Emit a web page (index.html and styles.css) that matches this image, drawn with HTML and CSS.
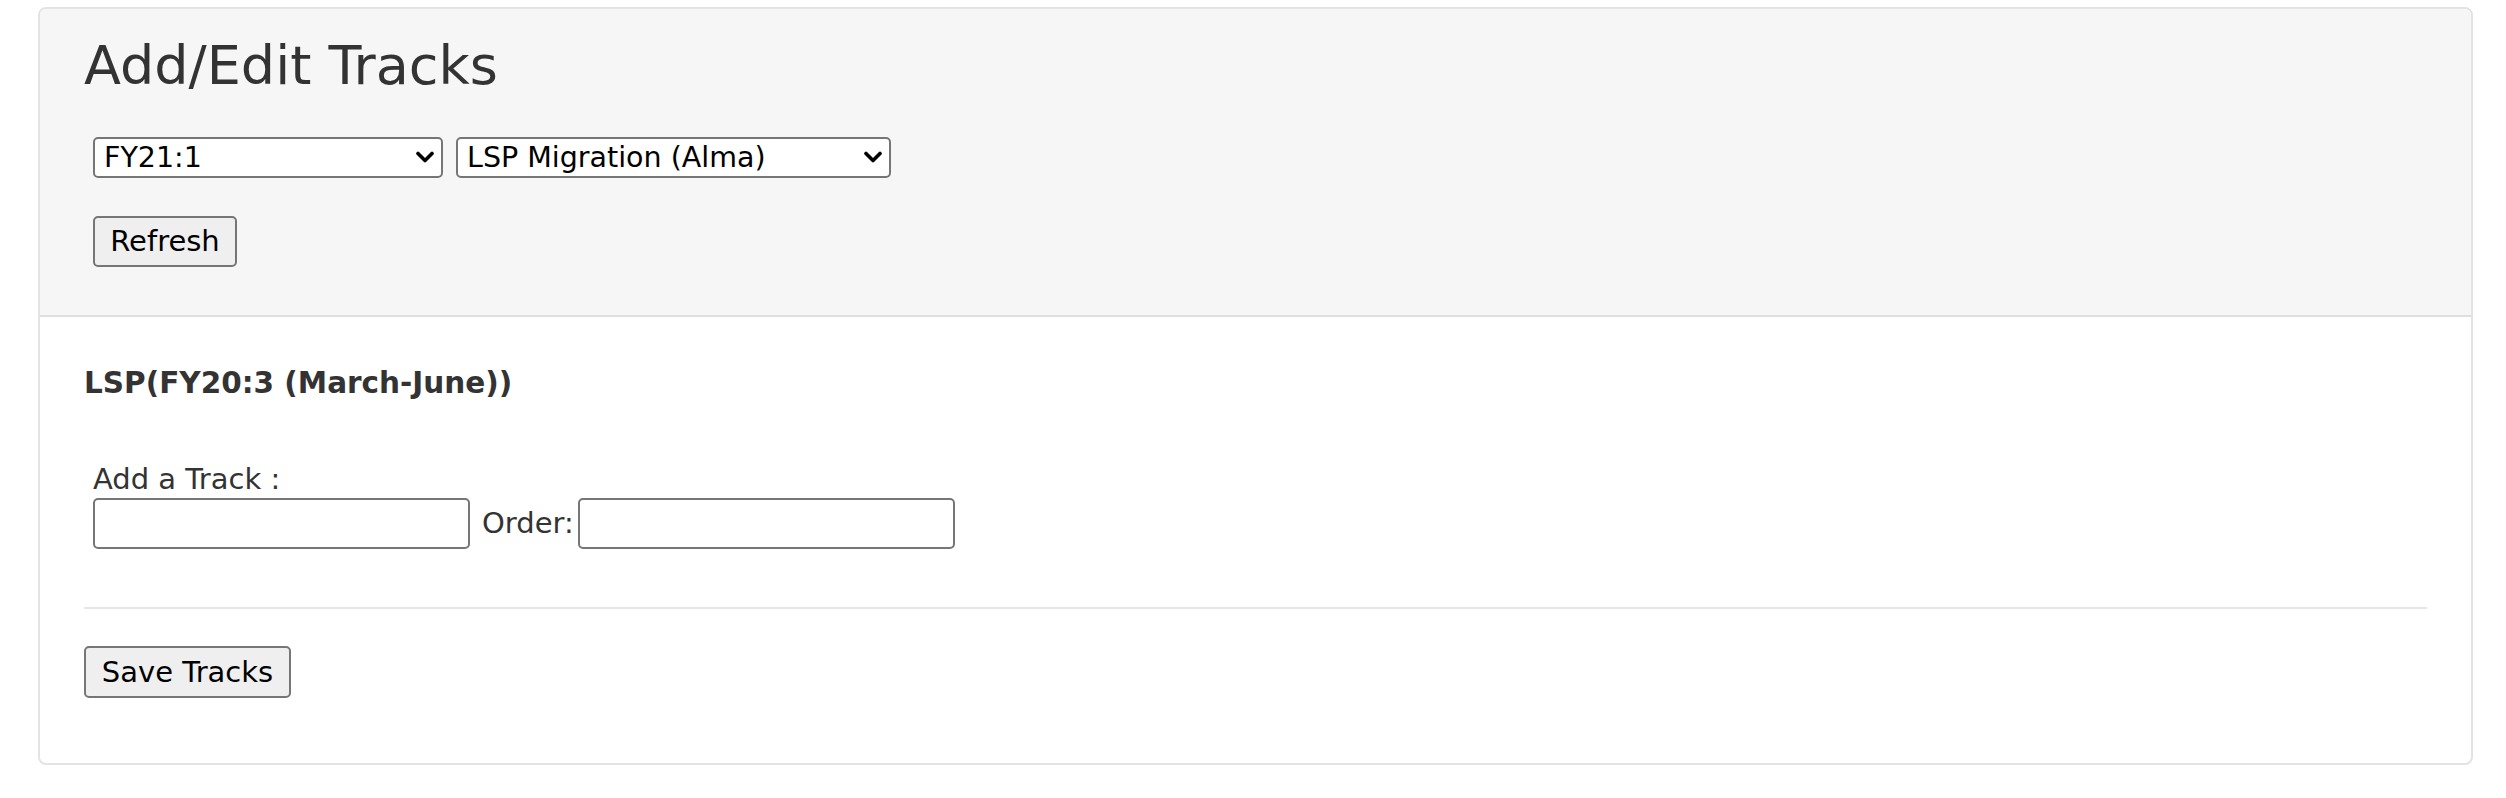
FILE: index.html
```html
<!DOCTYPE html>
<html lang="en">
<head>
<meta charset="utf-8">
<title>Add/Edit Tracks</title>
<link rel="stylesheet" href="styles.css">
</head>
<body>
<div class="card">
  <div class="card-head">
    <h1 class="title">Add/Edit Tracks</h1>
    <div class="select-row">
      <span class="select-wrap w1">
        <select class="sel"><option>FY21:1</option></select>
        <svg class="chev" width="20" height="12" viewBox="0 0 20 12"><path d="M3 2.5 L10 9.5 L17 2.5" fill="none" stroke="#000" stroke-width="3.6" stroke-linecap="round" stroke-linejoin="round"/></svg>
      </span>
      <span class="select-wrap w2">
        <select class="sel"><option>LSP Migration (Alma)</option></select>
        <svg class="chev" width="20" height="12" viewBox="0 0 20 12"><path d="M3 2.5 L10 9.5 L17 2.5" fill="none" stroke="#000" stroke-width="3.6" stroke-linecap="round" stroke-linejoin="round"/></svg>
      </span>
    </div>
    <div class="btn-row">
      <button class="btn refresh">Refresh</button>
    </div>
  </div>
  <div class="card-body">
    <h4 class="sub">LSP(FY20:3 (March-June))</h4>
    <div class="track-form">
      <label class="lbl">Add a Track :</label>
      <div class="inputs">
        <input class="txt" type="text">
        <span class="order">Order:</span>
        <input class="txt" type="text">
      </div>
    </div>
    <div class="rule"></div>
    <div>
      <button class="btn save">Save Tracks</button>
    </div>
  </div>
</div>
</body>
</html>
```

FILE: styles.css
```css
html, body {
  margin: 0;
  padding: 0;
  background: #fff;
}
body {
  font-family: "DejaVu Sans", Verdana, sans-serif;
  color: #333;
  padding: 7px 33px 0 38px;
}
.card {
  border: 2px solid #e3e3e3;
  border-radius: 8px;
  overflow: hidden;
  height: 758px;
  box-sizing: border-box;
  display: flex;
  flex-direction: column;
}
.card-head {
  background: #f6f6f6;
  border-bottom: 2px solid #dedede;
  padding: 25px 44px 48px 44px;
  display: flex;
  flex-direction: column;
}
.title {
  margin: 0;
  font-size: 54px;
  font-weight: normal;
  line-height: 1.2;
  color: #333;
}
.select-row {
  display: flex;
  gap: 13px;
  margin: 38px 0 0 9px;
}
.select-wrap {
  position: relative;
  display: block;
  height: 41px;
}
.w1 { width: 350px; }
.w2 { width: 435px; }
.sel {
  appearance: none;
  -webkit-appearance: none;
  width: 100%;
  height: 41px;
  box-sizing: border-box;
  border: 2px solid #767676;
  border-radius: 5px;
  background: #fff;
  color: #000;
  font-family: "DejaVu Sans", Verdana, sans-serif;
  font-size: 28.5px;
  padding: 0 0 0 9px;
  margin: 0;
}
.chev {
  position: absolute;
  right: 8px;
  top: 14px;
  pointer-events: none;
}
.btn-row {
  margin: 38px 0 0 9px;
  display: flex;
}
.btn {
  font-family: "DejaVu Sans", Verdana, sans-serif;
  font-size: 29px;
  color: #000;
  background: #efefef;
  border: 2px solid #767676;
  border-radius: 5px;
  height: 51px;
  padding: 0;
  margin: 0;
  box-sizing: border-box;
}
.refresh { width: 144px; }
.save { width: 207px; height: 52px; }
.card-body {
  padding: 49px 44px 0 44px;
  display: flex;
  flex-direction: column;
}
.sub {
  margin: 0;
  font-size: 29.5px;
  font-weight: bold;
  line-height: 1.2;
  color: #333;
}
.track-form {
  margin: 61px 0 0 9px;
  display: flex;
  flex-direction: column;
}
.lbl {
  font-size: 29px;
  line-height: 1.2;
  color: #333;
}
.inputs {
  display: flex;
  align-items: center;
  margin-top: 1px;
}
.txt {
  width: 377px;
  height: 51px;
  box-sizing: border-box;
  border: 2px solid #767676;
  border-radius: 5px;
  background: #fff;
  margin: 0;
  padding: 0 6px;
}
.order {
  font-size: 29px;
  color: #333;
  margin: 0 4px 0 12px;
}
.rule {
  height: 2px;
  background: #e6e6e6;
  margin: 58px 0 37px 0;
}
```
